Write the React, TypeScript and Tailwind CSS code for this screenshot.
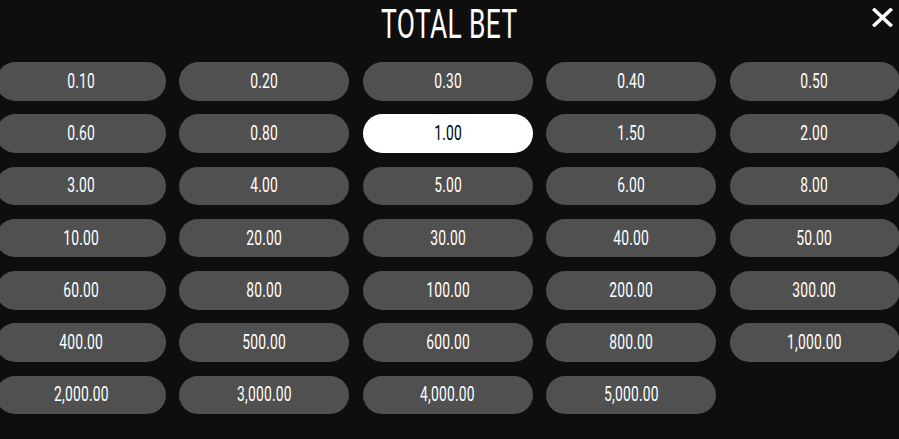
import { useState } from 'react'

// bet values, in the order they sit in the grid
const BETS = [
  '0.10', '0.20', '0.30', '0.40', '0.50',
  '0.60', '0.80', '1.00', '1.50', '2.00',
  '3.00', '4.00', '5.00', '6.00', '8.00',
  '10.00', '20.00', '30.00', '40.00', '50.00',
  '60.00', '80.00', '100.00', '200.00', '300.00',
  '400.00', '500.00', '600.00', '800.00', '1,000.00',
  '2,000.00', '3,000.00', '4,000.00', '5,000.00',
]

export default function App() {
  const [selected, setSelected] = useState('1.00')

  return (
    <div
      className="relative h-[439px] w-[899px] overflow-hidden bg-[#0e0e0e] text-white"
      style={{ fontFamily: 'Roboto, "DejaVu Sans", sans-serif' }}
    >
      {/* header */}
      <div className="flex h-[62px] justify-center pt-[5px]">
        <h1 className="inline-block scale-x-[0.66] text-[40px] font-normal leading-none tracking-[0.5px]">
          TOTAL BET
        </h1>
      </div>

      <button className="absolute right-[6px] top-[8px] flex h-[19px] w-[21px] items-center justify-center">
        <svg viewBox="0 0 21 19" className="h-[19px] w-[21px]">
          <path d="M2.5 2 L18.5 17 M18.5 2 L2.5 17" stroke="white" strokeWidth="3.6" strokeLinecap="square" />
        </svg>
      </button>

      {/* bet grid */}
      <div className="ml-[-4px] grid w-[904px] grid-cols-[repeat(5,170px)] gap-x-[13.4px] gap-y-[13.7px]">
        {BETS.map((b) => {
          const active = b === selected
          return (
            <button
              key={b}
              onClick={() => setSelected(b)}
              className={
                'flex h-[38.6px] items-center justify-center rounded-full ' +
                (active ? 'bg-white text-black' : 'bg-[#505050] text-white')
              }
            >
              <span className="inline-block scale-x-[0.66] text-[21px] leading-none tracking-[0.3px]">{b}</span>
            </button>
          )
        })}
      </div>
    </div>
  )
}
